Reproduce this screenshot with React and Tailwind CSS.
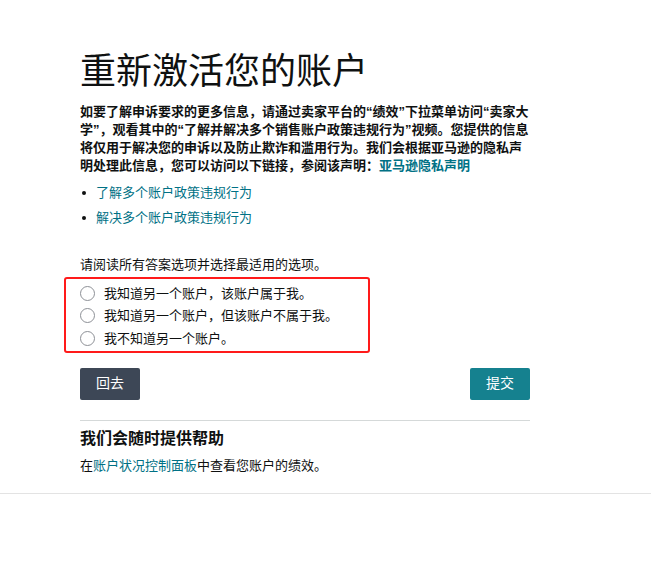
export default function App() {
  const font = { fontFamily: '"Liberation Sans", "Noto Sans CJK SC", sans-serif' };
  return (
    <div className="w-[651px] h-[562px] bg-white text-[#0f1111]" style={font}>
      <div className="ml-[80px] w-[450px] pt-[50px]">
        <h1 className="text-[36px] leading-[43px] font-normal text-[#0f1111]">重新激活您的账户</h1>
        <p className="mt-[10px] text-[13px] leading-[18px] font-bold">
          如要了解申诉要求的更多信息，请通过卖家平台的“绩效”下拉菜单访问“卖家大学”，观看其中的“了解并解决多个销售账户政策违规行为”视频。您提供的信息将仅用于解决您的申诉以及防止欺诈和滥用行为。我们会根据亚马逊的隐私声明处理此信息，您可以访问以下链接，参阅该声明：
          <span className="text-[#007185]">亚马逊隐私声明</span>
        </p>
        <ul className="mt-[9px] text-[13px] leading-[18px]">
          <li className="flex items-center mb-[7px]">
            <span className="ml-[2px] mr-[10px] w-[4px] h-[4px] rounded-full bg-[#0f1111] shrink-0"></span>
            <span className="text-[#007185]">了解多个账户政策违规行为</span>
          </li>
          <li className="flex items-center">
            <span className="ml-[2px] mr-[10px] w-[4px] h-[4px] rounded-full bg-[#0f1111] shrink-0"></span>
            <span className="text-[#007185]">解决多个账户政策违规行为</span>
          </li>
        </ul>
        <p className="mt-[29px] text-[13px] leading-[18px]">请阅读所有答案选项并选择最适用的选项。</p>
        <div className="mt-[3px] -ml-[16px] w-[306px] border-2 border-[#ff1a1a] rounded-[3px] pl-[14px] pt-[3px] pb-[1px]">
          {["我知道另一个账户，该账户属于我。", "我知道另一个账户，但该账户不属于我。", "我不知道另一个账户。"].map((t) => (
            <label key={t} className="flex items-center h-[22.5px] text-[13px]">
              <span className="w-[15px] h-[15px] rounded-full border border-[#8d9096] bg-white shrink-0"></span>
              <span className="ml-[9px]">{t}</span>
            </label>
          ))}
        </div>
        <div className="mt-[15px] flex justify-between">
          <button className="w-[60px] h-[32px] rounded-[2px] bg-[#3d4756] text-white text-[14px]">回去</button>
          <button className="w-[60px] h-[32px] rounded-[2px] bg-[#15818f] text-white text-[14px]">提交</button>
        </div>
        <div className="mt-[20px] h-px bg-[#d5d9d9]"></div>
        <h2 className="mt-[7px] text-[16px] leading-[22px] font-bold">我们会随时提供帮助</h2>
        <p className="mt-[7px] text-[13px] leading-[18px]">
          在<span className="text-[#007185]">账户状况控制面板</span>中查看您账户的绩效。
        </p>
      </div>
      <div className="mt-[18px] h-px bg-[#e3e3e3] w-full"></div>
    </div>
  );
}
